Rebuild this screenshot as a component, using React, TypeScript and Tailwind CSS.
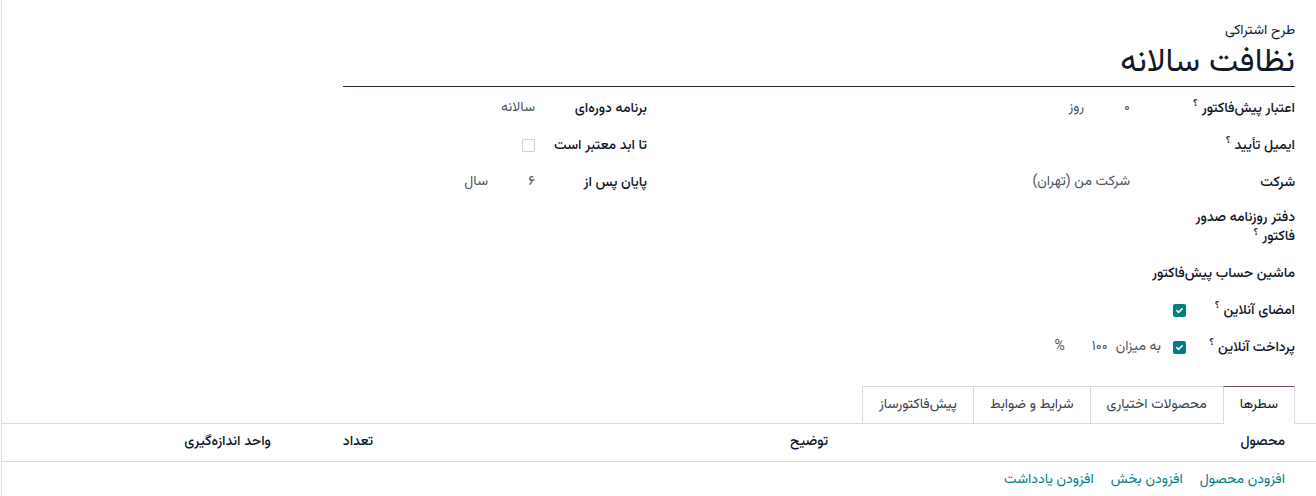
import type { ReactNode } from "react";

const Help = () => (
  <sup className="ms-1 text-[11px] text-[#1f2937]">؟</sup>
);

const Check = ({ on }: { on: boolean }) =>
  on ? (
    <span className="flex h-[13px] w-[13px] items-center justify-center rounded-[2px] bg-[#017e84]">
      <svg viewBox="0 0 12 12" className="h-[9px] w-[9px]" fill="none" stroke="white" strokeWidth={2.2}>
        <path d="M2.5 6.2l2.3 2.3 4.7-4.8" strokeLinecap="round" strokeLinejoin="round" />
      </svg>
    </span>
  ) : (
    <span className="block h-[13px] w-[13px] rounded-[1px] border border-[#d0d4d8] bg-white" />
  );

const Row = ({
  label,
  help,
  labelW,
  children,
  wrap,
}: {
  label: ReactNode;
  help?: boolean;
  labelW: string;
  children?: ReactNode;
  wrap?: boolean;
}) => (
  <div className="flex min-h-[37px] items-center">
    <div className={`${labelW} shrink-0 py-[8px] text-[14px] font-medium text-[#111827]`}>
      <div className={wrap ? "max-w-[118px] leading-[19px]" : "whitespace-nowrap leading-[20px]"}>
        {label}
        {help && <Help />}
      </div>
    </div>
    <div className="flex items-center text-[14px] text-[#4b5563]">{children}</div>
  </div>
);

export default function App() {
  return (
    <div
      dir="rtl"
      className="ml-px h-[496px] w-[1315px] overflow-hidden border-l border-[#d8dadd] bg-white font-['Vazirmatn',sans-serif]"
    >
      <div className="px-[21px] pt-[21px]">
        <div className="w-[952px]">
          <div className="text-[14px] leading-[20px] text-[#111827]">طرح اشتراکی</div>
          <div className="border-b border-[#1f2937] pb-[1px] text-[33px] leading-[44px] text-[#111827]">
            نظافت سالانه
          </div>
        </div>

        <div className="mt-[3px] grid grid-cols-2 gap-x-[24px]">
          <div className="flex flex-col">
            <Row label="اعتبار پیش‌فاکتور" help labelW="w-[165px]">
              <span className="w-[46px]">۰</span>
              <span>روز</span>
            </Row>
            <Row label="ایمیل تأیید" help labelW="w-[165px]" />
            <Row label="شرکت" labelW="w-[165px]">
              <span>شرکت من (تهران)</span>
            </Row>
            <Row label="دفتر روزنامه صدور فاکتور" help wrap labelW="w-[165px]" />
            <Row label="ماشین حساب پیش‌فاکتور" labelW="w-[165px]" />
            <Row label="امضای آنلاین" help labelW="w-[109px]">
              <Check on />
            </Row>
            <Row label="پرداخت آنلاین" help labelW="w-[109px]">
              <Check on />
              <span className="ms-[12px]">به میزان</span>
              <span className="ms-[8px] w-[43px]">۱۰۰</span>
              <span>%</span>
            </Row>
          </div>

          <div className="flex flex-col">
            <Row label="برنامه دوره‌ای" labelW="w-[112px]">
              <span>سالانه</span>
            </Row>
            <Row label="تا ابد معتبر است" labelW="w-[112px]">
              <Check on={false} />
            </Row>
            <Row label="پایان پس از" labelW="w-[112px]">
              <span className="w-[47px]">۶</span>
              <span>سال</span>
            </Row>
          </div>
        </div>
      </div>

      <div className="mt-[20px]">
        <div className="flex border-b border-[#d8dadd] pr-[21px] text-[14px]">
          <div className="-mb-px border-x border-t border-x-[#d8dadd] border-t-[#714b67] bg-white px-[16px] pt-[8px] pb-[9px] leading-[20px] text-[#111827]">
            سطرها
          </div>
          <div className="border-t border-l border-[#d8dadd] px-[16px] py-[8px] leading-[20px] text-[#374151]">
            محصولات اختیاری
          </div>
          <div className="border-t border-l border-[#d8dadd] px-[16px] py-[8px] leading-[20px] text-[#374151]">
            شرایط و ضوابط
          </div>
          <div className="border-t border-l border-[#d8dadd] px-[16px] py-[8px] leading-[20px] text-[#374151]">
            پیش‌فاکتورساز
          </div>
        </div>

        <div className="grid h-[38px] grid-cols-[457px_455px_102px_1fr] items-center border-b border-[#d8dadd] pr-[31px] text-[14px] font-medium text-[#111827]">
          <div>محصول</div>
          <div>توضیح</div>
          <div>تعداد</div>
          <div>واحد اندازه‌گیری</div>
        </div>

        <div className="flex gap-[17px] pr-[31px] pt-[8px] text-[14px] text-[#017e84]">
          <a href="#">افزودن محصول</a>
          <a href="#">افزودن بخش</a>
          <a href="#">افزودن یادداشت</a>
        </div>
      </div>
    </div>
  );
}
